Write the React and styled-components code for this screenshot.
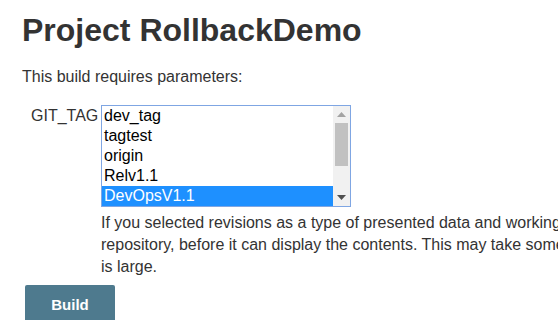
import React from 'react'
import styled, { createGlobalStyle } from 'styled-components'

const tags = ['dev_tag', 'tagtest', 'origin', 'Relv1.1', 'DevOpsV1.1']

const App = () => (
  <>
    <GlobalStyle />
    <Page>
      <Title>Project RollbackDemo</Title>
      <Intro>This build requires parameters:</Intro>

      <ParamRow>
        <Label>GIT_TAG</Label>
        <Field>
          <TagSelect>
            <TagList>
              {tags.map(tag => (
                <TagOption key={tag} selected={tag === 'DevOpsV1.1'}>
                  {tag}
                </TagOption>
              ))}
            </TagList>
            <Scrollbar>
              <ScrollArrow>
                <svg width="9" height="5" viewBox="0 0 9 5">
                  <path d="M4.5 0L9 5H0z" fill="#a3a3a3" />
                </svg>
              </ScrollArrow>
              <ScrollTrack>
                <ScrollThumb />
              </ScrollTrack>
              <ScrollArrow>
                <svg width="9" height="5" viewBox="0 0 9 5">
                  <path d="M0 0H9L4.5 5z" fill="#505050" />
                </svg>
              </ScrollArrow>
            </Scrollbar>
          </TagSelect>
          <Help>
            If you selected revisions as a type of presented data and working copy does not exist, plugin has to clone
            <br />
            repository, before it can display the contents. This may take some time if your repository
            <br />
            is large.
          </Help>
        </Field>
      </ParamRow>

      <BuildButton>Build</BuildButton>
    </Page>
  </>
)

const GlobalStyle = createGlobalStyle`
  html, body {
    margin: 0;
    overflow: hidden;
    background: #fff;
  }
  body {
    font-family: "Liberation Sans", Arial, sans-serif;
    color: #333;
  }
`

const Page = styled.div`
  padding: 12px 0 0 22px;
  width: 900px;
`

const Title = styled.h1`
  font-size: 32px;
  font-weight: bold;
  margin: 0;
  line-height: 37px;
`

const Intro = styled.p`
  font-size: 16px;
  line-height: 20px;
  margin: 18px 0 0 0;
`

const ParamRow = styled.div`
  display: flex;
  align-items: flex-start;
  margin: 18px 0 0 9px;
`

const Label = styled.div`
  font-size: 16px;
  line-height: 20px;
  padding-top: 1px;
  width: 70px;
`

const Field = styled.div`
  display: flex;
  flex-direction: column;
`

const TagSelect = styled.div`
  display: flex;
  width: 248px;
  height: 100px;
  border: 1px solid #7fa6e3;
  overflow: hidden;
`

const TagList = styled.div`
  flex: 1;
  display: flex;
  flex-direction: column;
`

const TagOption = styled.div`
  font-size: 16px;
  line-height: 20px;
  height: 20px;
  padding: 0 2px;
  color: ${props => (props.selected ? '#fff' : '#000')};
  background: ${props => (props.selected ? '#1e90ff' : 'transparent')};
`

const Scrollbar = styled.div`
  width: 17px;
  display: flex;
  flex-direction: column;
  background: #f1f1f1;
`

const ScrollArrow = styled.div`
  height: 17px;
  display: flex;
  align-items: center;
  justify-content: center;
  svg {
    display: block;
  }
`

const ScrollTrack = styled.div`
  flex: 1;
  padding: 0 2px;
`

const ScrollThumb = styled.div`
  height: 43px;
  background: #c1c1c1;
`

const Help = styled.div`
  font-size: 16px;
  line-height: 22px;
  margin-top: 5px;
  white-space: nowrap;
`

const BuildButton = styled.button`
  margin: 7px 0 0 3px;
  width: 90px;
  height: 39px;
  background: #4e7a8e;
  color: #fff;
  border: none;
  border-radius: 2px;
  font-family: "Liberation Sans", Arial, sans-serif;
  font-size: 15px;
  font-weight: bold;
  padding: 0;
  display: flex;
  align-items: center;
  justify-content: center;
`

export default App
